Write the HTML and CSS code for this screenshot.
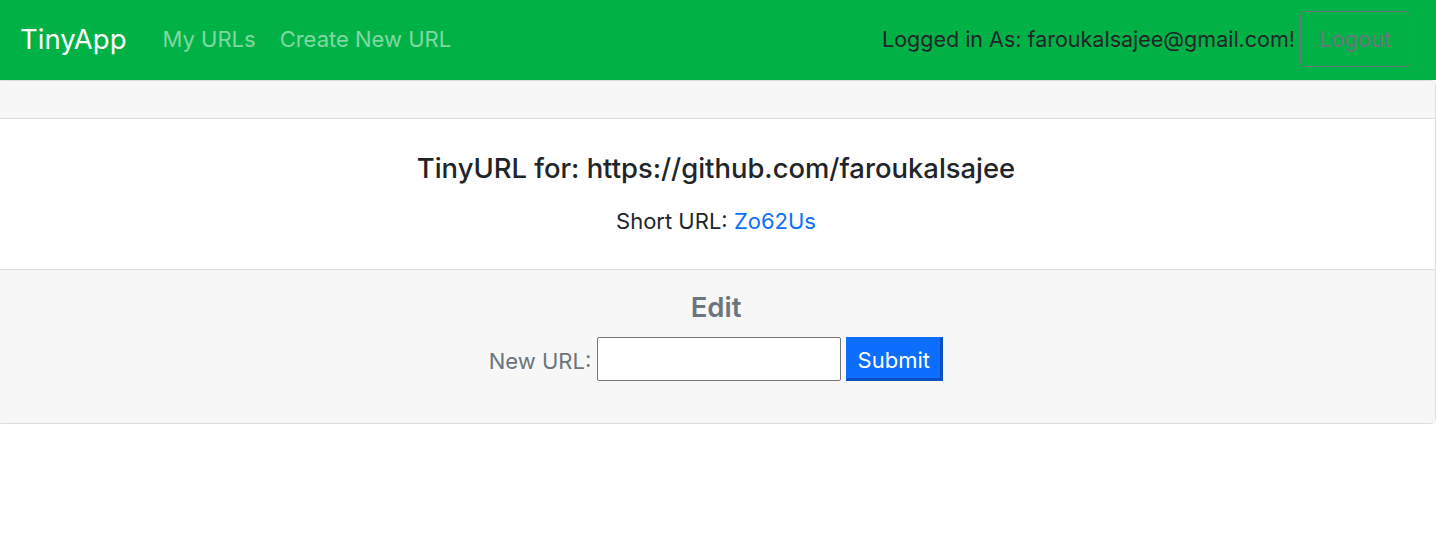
FILE: index.html
```html
<!DOCTYPE html>
<html>
<head>
<meta charset="utf-8">
<link rel="stylesheet" href="styles.css">
</head>
<body>
<nav class="navbar">
  <a class="brand" href="#">TinyApp</a>
  <div class="nav-links">
    <a class="nav-link" href="#">My URLs</a>
    <a class="nav-link" href="#">Create New URL</a>
  </div>
  <div class="nav-right">
    <span class="login-text">Logged in As: faroukalsajee@gmail.com!</span>
    <button class="btn-logout">Logout</button>
  </div>
</nav>
<div class="card">
  <div class="card-header"></div>
  <div class="card-body">
    <h5 class="card-title">TinyURL for: https://github.com/faroukalsajee</h5>
    <p class="card-text">Short URL: <a class="short-link" href="#">Zo62Us</a></p>
  </div>
  <div class="card-footer">
    <h5 class="edit-title">Edit</h5>
    <form class="edit-form">
      <label class="form-label">New URL:</label>
      <input class="url-input" type="text">
      <button class="btn-submit" type="button">Submit</button>
    </form>
  </div>
</div>
</body>
</html>
```
FILE: styles.css
```css
html, body {
  margin: 0;
  padding: 0;
  background: #fff;
  font-family: Inter, "Noto Sans", "Liberation Sans", sans-serif;
  color: #212529;
  font-size: 22px;
}
.navbar {
  height: 80px;
  background: #00b246;
  display: flex;
  align-items: center;
  padding: 0 26px 2px 20px;
  box-sizing: border-box;
}
.brand {
  font-size: 27.5px;
  color: #fff;
  text-decoration: none;
  margin-right: 36px;
}
.nav-links {
  display: flex;
  gap: 24px;
}
.nav-link {
  color: rgba(255,255,255,0.5);
  text-decoration: none;
  font-size: 22px;
}
.nav-right {
  margin-left: auto;
  display: flex;
  align-items: center;
  gap: 5px;
}
.login-text {
  font-size: 21.5px;
  color: #212529;
}
.btn-logout {
  width: 110px;
  height: 56px;
  margin-top: -1px;
  background: transparent;
  border: 1px solid #6c757d;
  border-radius: 5px;
  color: #6c757d;
  font-family: inherit;
  font-size: 22px;
  padding: 0;
}
.card {
  margin: 0 0 0 -4px;
  width: 1440px;
  box-sizing: border-box;
  border: 1px solid #dcdcdc;
  border-radius: 6px;
  overflow: hidden;
}
.card-header {
  height: 37px;
  background: #f7f7f7;
  border-bottom: 1px solid #dcdcdc;
}
.card-body {
  height: 150px;
  box-sizing: border-box;
  background: #fff;
  text-align: center;
  padding-top: 34px;
}
.card-title {
  margin: 0;
  font-size: 27.4px;
  font-weight: 500;
  line-height: 30px;
}
.card-text {
  margin: 23px 0 0;
  font-size: 22px;
  line-height: 30px;
}
.short-link {
  color: #0d6efd;
  text-decoration: none;
}
.card-footer {
  height: 154px;
  box-sizing: border-box;
  background: #f7f7f7;
  border-top: 1px solid #dcdcdc;
  text-align: center;
  padding-top: 22px;
}
.edit-title {
  margin: 0;
  font-size: 27.5px;
  font-weight: 600;
  line-height: 30px;
  color: #6c757d;
}
.edit-form {
  margin-top: 15px;
  display: flex;
  justify-content: center;
  align-items: center;
}
.form-label {
  color: #6c757d;
  font-size: 22px;
  margin-right: 6px;
  padding-top: 3px;
}
.url-input {
  width: 244px;
  height: 44px;
  box-sizing: border-box;
  border: 1px solid #767676;
  border-radius: 2px;
  background: #fff;
  margin: 0 5px 0 0;
  padding: 0;
}
.btn-submit {
  width: 97px;
  height: 44px;
  box-sizing: border-box;
  background: #0d6efd;
  color: #fff;
  font-family: inherit;
  font-size: 22px;
  border-style: solid;
  border-width: 1px 3px 3px 1px;
  border-color: #0d6efd #0a4fc4 #0a4fc4 #0d6efd;
  padding: 3px 0 0;
}
```
